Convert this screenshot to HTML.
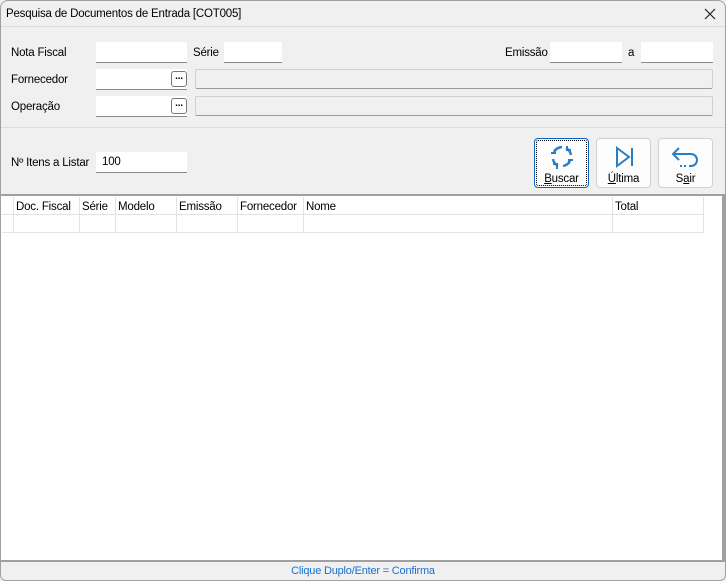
<!DOCTYPE html><html><head><style>
*{box-sizing:border-box;margin:0;padding:0}
body{width:726px;height:581px;background:#f0f0f0;font-family:"Liberation Sans",sans-serif;font-size:11.5px;letter-spacing:-0.2px;color:#000;position:relative;overflow:hidden}
.a{position:absolute}
.inp{position:absolute;background:#fff;border-bottom:1px solid #8a8a8a;height:21px;padding:4px 6px}
.ro{position:absolute;background:#f0f0f0;border:1px solid #cfcfcf;border-bottom:1px solid #9a9a9a;height:20px;border-radius:2px}
.dots{position:absolute;width:16px;height:16px;border:1px solid #777;border-radius:3px;background:#fff;font-size:10px;font-weight:bold;text-align:center;line-height:10px}
.btn{position:absolute;width:55px;height:50px;background:#fdfdfd;border:1px solid #d0d0d0;border-radius:4px;text-align:center}
.btn span{position:absolute;left:0;right:0;bottom:2px}
.h{position:absolute;top:197px;height:18px;border-right:1px solid #e3e3e3;padding:4px 2px 0}
.c{position:absolute;top:215px;height:18px;border-right:1px solid #e3e3e3;border-bottom:1px solid #e3e3e3}
</style></head><body>
<div class="a" style="left:0;top:0;width:726px;height:581px;border:1px solid #a0a0a0;border-radius:8px 8px 6px 6px"></div>
<div class="a" style="left:6px;top:8px">Pesquisa de Documentos de Entrada [COT005]</div>
<svg class="a" style="left:704px;top:8px" width="12" height="12"><path d="M1 1L11 11M11 1L1 11" stroke="#222" stroke-width="1.2"/></svg>
<div class="a" style="left:1px;top:26px;width:724px;height:1px;background:#dcdcdc"></div>
<div class="a" style="left:11px;top:47px">Nota Fiscal</div>
<div class="inp" style="left:96px;top:42px;width:91px"></div>
<div class="a" style="left:193px;top:47px">Série</div>
<div class="inp" style="left:224px;top:42px;width:58px"></div>
<div class="a" style="left:505px;top:47px">Emissão</div>
<div class="inp" style="left:550px;top:42px;width:72px"></div>
<div class="a" style="left:628px;top:47px">a</div>
<div class="inp" style="left:641px;top:42px;width:72px"></div>
<div class="a" style="left:11px;top:74px">Fornecedor</div>
<div class="inp" style="left:96px;top:69px;width:91px"></div>
<div class="dots" style="left:171px;top:71px">...</div>
<div class="ro" style="left:195px;top:69px;width:518px"></div>
<div class="a" style="left:11px;top:101px">Operação</div>
<div class="inp" style="left:96px;top:96px;width:91px"></div>
<div class="dots" style="left:171px;top:98px">...</div>
<div class="ro" style="left:195px;top:96px;width:518px"></div>
<div class="a" style="left:1px;top:127px;width:724px;height:1px;background:#dcdcdc"></div>
<div class="a" style="left:11px;top:157px">Nº Itens a Listar</div>
<div class="inp" style="left:96px;top:152px;width:91px">100</div>
<div class="btn" style="left:534px;top:138px;border:1px solid #0a64c8;outline:1px dotted #000;outline-offset:-3px">
<svg class="a" style="left:14px;top:5px" width="26" height="26" fill="none" stroke="#2a7fc4" stroke-width="2.4"><path d="M5 8A10 10 0 0 1 13 3M17 4A10 10 0 0 1 22 11M21 17A10 10 0 0 1 14 22M9 22A10 10 0 0 1 4 15"/><path d="M2 9L6 9L6 5M18 2L18 6L22 6M24 16L20 16L20 20M8 25L8 20L4 20" stroke-width="2"/></svg><span><u>B</u>uscar</span></div>
<div class="btn" style="left:596px;top:138px"><svg class="a" style="left:17px;top:7px" width="22" height="22" fill="none" stroke="#2a7fc4" stroke-width="2"><path d="M3 2L15 11L3 20Z"/><path d="M18 2V20"/></svg><span><u>Ú</u>ltima</span></div>
<div class="btn" style="left:658px;top:138px"><svg class="a" style="left:12px;top:7px" width="30" height="22" fill="none" stroke="#2a7fc4" stroke-width="2"><path d="M2 8H20A6 6 0 0 1 20 20H18"/><path d="M8 2L2 8L8 14"/><path d="M9 20H16" stroke-dasharray="2 2"/></svg><span>S<u>a</u>ir</span></div>
<div class="a" style="left:1px;top:194px;width:724px;height:368px;background:#fff;border-top:2px solid #a0a0a0;border-right:3px solid #a0a0a0;border-bottom:2px solid #a0a0a0"></div>
<div class="h" style="left:2px;width:12px"></div>
<div class="h" style="left:14px;width:66px">Doc. Fiscal</div>
<div class="h" style="left:80px;width:36px">Série</div>
<div class="h" style="left:116px;width:61px">Modelo</div>
<div class="h" style="left:177px;width:61px">Emissão</div>
<div class="h" style="left:238px;width:66px">Fornecedor</div>
<div class="h" style="left:304px;width:309px">Nome</div>
<div class="h" style="left:613px;width:91px">Total</div>
<div class="a" style="left:2px;top:214px;width:702px;height:1px;background:#e3e3e3"></div>
<div class="c" style="left:2px;width:12px"></div>
<div class="c" style="left:14px;width:66px"></div>
<div class="c" style="left:80px;width:36px"></div>
<div class="c" style="left:116px;width:61px"></div>
<div class="c" style="left:177px;width:61px"></div>
<div class="c" style="left:238px;width:66px"></div>
<div class="c" style="left:304px;width:309px"></div>
<div class="c" style="left:613px;width:91px"></div>
<div class="a" style="left:0;top:565px;width:726px;text-align:center;color:#1a6fd0;font-size:11px">Clique Duplo/Enter = Confirma</div>
</body></html>
